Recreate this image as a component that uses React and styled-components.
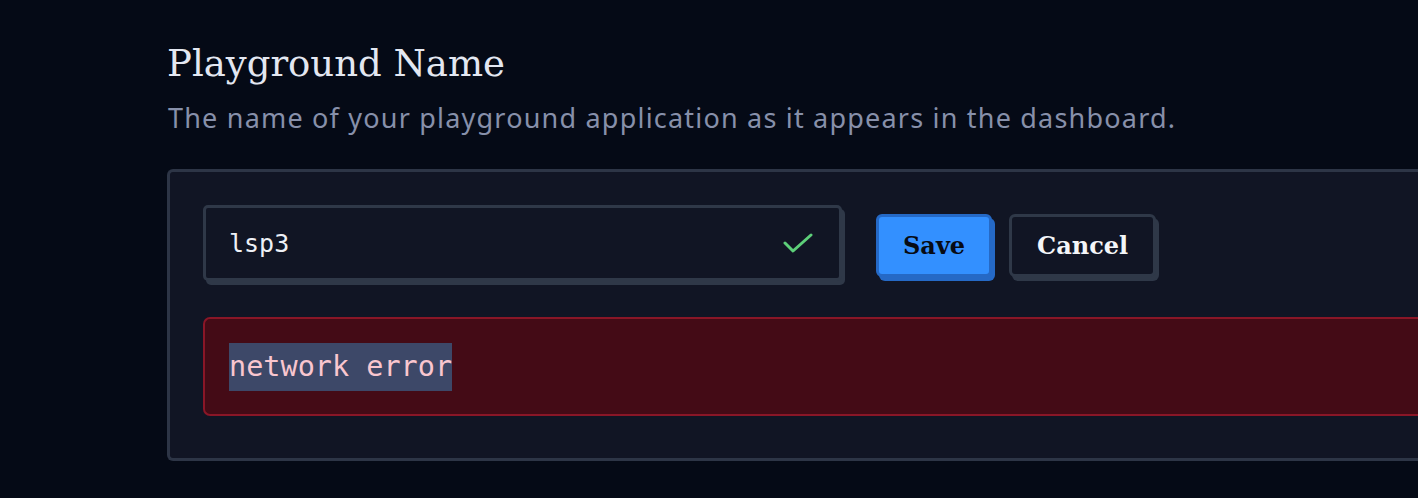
import styled, { createGlobalStyle } from "styled-components";

const GlobalStyle = createGlobalStyle`
  html, body {
    margin: 0;
    background: #050a16;
    overflow: hidden;
  }
`;

const Page = styled.div`
  padding: 40px 0 0 167px;
  height: 498px;
  box-sizing: border-box;
  overflow: hidden;
`;

const Title = styled.h1`
  margin: 0;
  font-family: "DejaVu Serif", "Liberation Serif", serif;
  font-weight: 400;
  font-size: 37px;
  line-height: 48px;
  color: #e3e7f1;
`;

const Subtitle = styled.p`
  margin: 12px 0 0 1px;
  font-family: "Noto Sans", "Open Sans", sans-serif;
  font-size: 27px;
  line-height: 36px;
  color: #8790aa;
  letter-spacing: 1.2px;
  white-space: nowrap;
`;

const Card = styled.div`
  margin-top: 33px;
  width: 1260px;
  box-sizing: border-box;
  border: 3px solid #2d3546;
  border-right: none;
  border-radius: 6px 0 0 6px;
  background: #111524;
  padding: 33px 0 42px 33px;
`;

const Row = styled.div`
  display: flex;
  align-items: flex-start;
`;

const InputBox = styled.div`
  width: 639px;
  height: 76px;
  box-sizing: border-box;
  border: 3px solid #2f3848;
  border-radius: 5px;
  background: #111524;
  box-shadow: 3px 4px 0 #2f3848;
  display: flex;
  align-items: center;
  justify-content: space-between;
  padding: 0 26px 0 23px;
`;

const InputText = styled.span`
  font-family: "DejaVu Sans Mono", "Liberation Mono", monospace;
  font-size: 25px;
  color: #eef0f6;
`;

const Buttons = styled.div`
  display: flex;
  gap: 17px;
  margin: 9px 0 0 34px;
`;

const Button = styled.button`
  height: 63px;
  padding: 0 ${(p) => (p.$primary ? "24px" : "25px")};
  border: 3px solid ${(p) => (p.$primary ? "#2569c6" : "#2f3848")};
  border-radius: 6px;
  background: ${(p) => (p.$primary ? "#3390ff" : "#111524")};
  box-shadow: 3px 4px 0 ${(p) => (p.$primary ? "#2569c6" : "#2f3848")};
  color: ${(p) => (p.$primary ? "#070b14" : "#f4f5f8")};
  font-family: "DejaVu Serif", "Liberation Serif", serif;
  font-weight: 700;
  font-size: 24px;
  cursor: pointer;
`;

const ErrorBox = styled.div`
  margin-top: 36px;
  height: 99px;
  box-sizing: border-box;
  border: 2px solid #8a1627;
  border-right: none;
  border-radius: 7px 0 0 7px;
  background: #440b16;
  display: flex;
  align-items: center;
  padding-left: 24px;
`;

const ErrorText = styled.span`
  font-family: "DejaVu Sans Mono", "Liberation Mono", monospace;
  font-size: 28.5px;
  line-height: 48px;
  color: #f9c6cf;
  background: #3d4868;
`;

function Check() {
  return (
    <svg width="30" height="22" viewBox="0 0 30 22" fill="none">
      <path
        d="M2 11 L10 19 L28 3"
        stroke="#5dcf79"
        strokeWidth="3"
        strokeLinecap="round"
        strokeLinejoin="round"
      />
    </svg>
  );
}

export default function App() {
  return (
    <Page>
      <GlobalStyle />
      <Title>Playground Name</Title>
      <Subtitle>The name of your playground application as it appears in the dashboard.</Subtitle>
      <Card>
        <Row>
          <InputBox>
            <InputText>lsp3</InputText>
            <Check />
          </InputBox>
          <Buttons>
            <Button $primary>Save</Button>
            <Button>Cancel</Button>
          </Buttons>
        </Row>
        <ErrorBox>
          <ErrorText>network error</ErrorText>
        </ErrorBox>
      </Card>
    </Page>
  );
}
